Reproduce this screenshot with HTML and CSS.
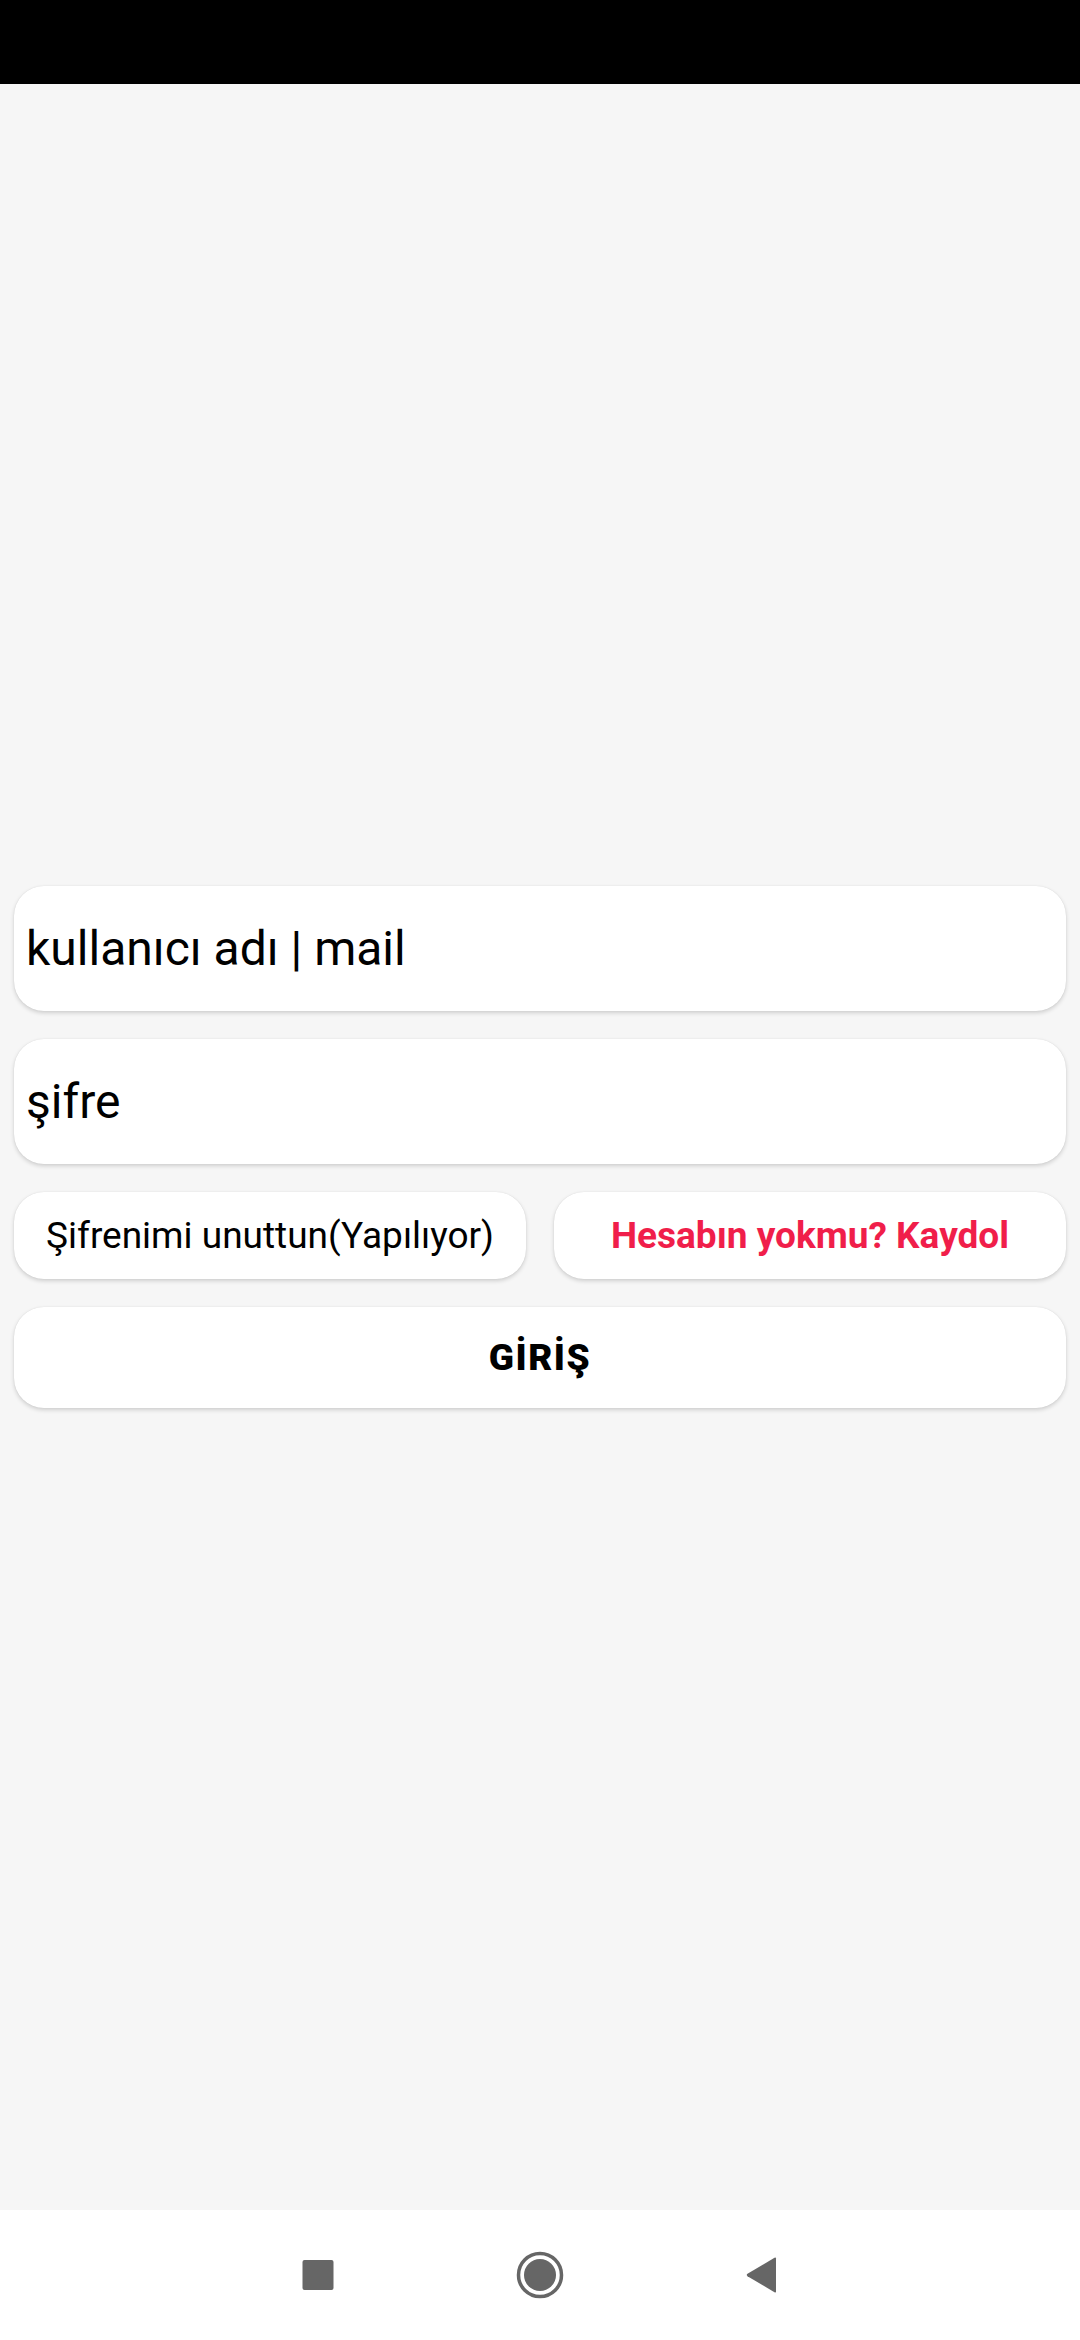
FILE: index.html
```html
<!DOCTYPE html>
<html lang="tr">
<head>
<meta charset="utf-8">
<title>Giriş</title>
<link rel="stylesheet" href="styles.css">
</head>
<body>
<div class="screen">
  <div class="status-bar"></div>
  <main class="content">
    <div class="form">
      <div class="field">kullanıcı adı | mail</div>
      <div class="field">şifre</div>
      <div class="row">
        <button class="btn">Şifrenimi unuttun(Yapılıyor)</button>
        <button class="btn btn-red">Hesabın yokmu? Kaydol</button>
      </div>
      <button class="btn btn-main">GİRİŞ</button>
    </div>
  </main>
  <nav class="nav-bar">
    <svg class="nav-icon" viewBox="0 0 48 48" width="48" height="48"><rect x="8.5" y="9" width="31" height="30" rx="2" fill="#666"/></svg>
    <svg class="nav-icon" viewBox="0 0 48 48" width="48" height="48"><circle cx="24" cy="24" r="21.5" fill="none" stroke="#666" stroke-width="3.5"/><circle cx="24" cy="24" r="16" fill="#666"/></svg>
    <svg class="nav-icon" viewBox="0 0 48 48" width="48" height="48"><path d="M38 7.5 L38 40.5 Q38 42 36.5 41.2 L9.5 25.2 Q8 24 9.5 22.8 L36.5 6.8 Q38 6 38 7.5 Z" fill="#666"/></svg>
  </nav>
</div>
</body>
</html>
```

FILE: styles.css
```css
* { box-sizing: border-box; }
html, body { margin: 0; padding: 0; }
body {
  width: 1080px;
  height: 2340px;
  background: #f6f6f6;
  font-family: Roboto, "Noto Sans", sans-serif;
  color: #000;
}
.screen {
  display: flex;
  flex-direction: column;
  height: 2340px;
}
.status-bar {
  height: 84px;
  background: #000;
  flex: none;
}
.content {
  flex: 1;
  display: flex;
  flex-direction: column;
  justify-content: center;
  background: #f6f6f6;
}
.form {
  display: flex;
  flex-direction: column;
  gap: 28px;
  padding: 0 14px;
}
.field {
  height: 125px;
  background: #fff;
  border-radius: 30px;
  display: flex;
  align-items: center;
  padding: 0 12px;
  font-size: 48px;
  color: #000;
  box-shadow: 0 0 1px rgba(0,0,0,0.12), 0 2px 4px rgba(0,0,0,0.16);
}
.row {
  display: flex;
  gap: 28px;
}
.btn {
  font-family: Roboto, "Noto Sans", sans-serif;
  border: none;
  background: #fff;
  border-radius: 30px;
  box-shadow: 0 0 1px rgba(0,0,0,0.12), 0 2px 4px rgba(0,0,0,0.16);
  color: #000;
  padding: 0;
  margin: 0;
}
.row .btn {
  flex: 1;
  height: 87px;
  font-size: 37px;
  font-weight: 400;
}
.row .btn-red {
  color: #f01e4a;
  font-weight: 700;
}
.btn-main {
  height: 101px;
  font-size: 37px;
  font-weight: 900;
  letter-spacing: 1.5px;
}
.nav-bar {
  height: 130px;
  flex: none;
  background: #fff;
  display: flex;
  justify-content: center;
  align-items: center;
  gap: 174px;
}
.nav-icon { display: block; }
```
